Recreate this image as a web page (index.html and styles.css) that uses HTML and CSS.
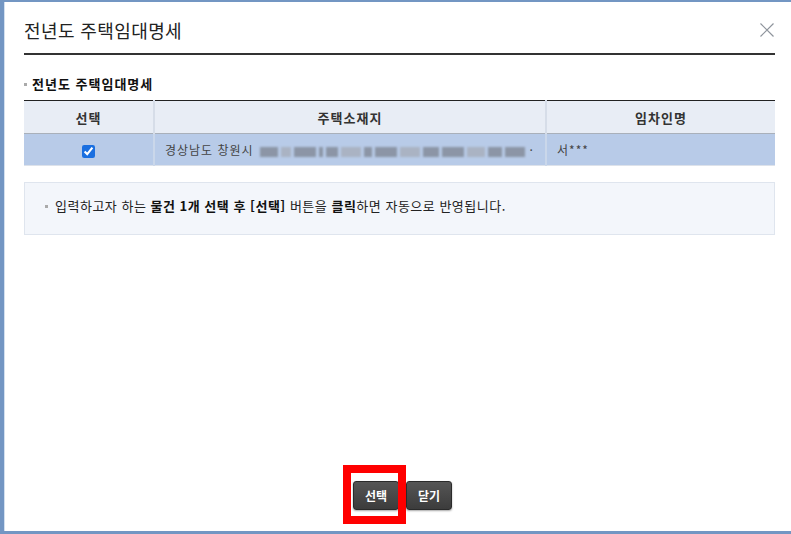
FILE: index.html
```html
<!DOCTYPE html>
<html lang="ko">
<head>
    <meta charset="UTF-8">
    <title>전년도 주택임대명세</title>
    <link rel="stylesheet" href="styles.css">
</head>
<body>
    <div class="popup">
        <div class="popup-head">
            <h1>전년도 주택임대명세</h1>
            <button class="close-btn" title="닫기">
                <svg width="14" height="14" viewBox="0 0 14 14">
                    <path d="M0.5 0.5 L13.5 13.5 M13.5 0.5 L0.5 13.5" stroke="#8e949c" stroke-width="1.2" fill="none"/>
                </svg>
            </button>
        </div>

        <h2 class="sub-title">전년도 주택임대명세</h2>

        <table class="list-table">
            <colgroup>
                <col style="width:130px">
                <col style="width:392px">
                <col>
            </colgroup>
            <thead>
                <tr>
                    <th>선택</th>
                    <th>주택소재지</th>
                    <th>임차인명</th>
                </tr>
            </thead>
            <tbody>
                <tr class="selected">
                    <td class="center"><input type="checkbox" checked></td>
                    <td>경상남도 창원시
                        <span class="masked">
                            <i class="m w18"></i><i class="m w10 lt"></i><i class="m w22"></i><i class="m w4"></i>
                            <i class="m w12"></i><i class="m w20 lt"></i><i class="m w8"></i>
                            <i class="m w22"></i><i class="m w20 lt"></i><i class="m w16"></i><i class="m w22"></i>
                            <i class="m w18 lt"></i><i class="m w14"></i><i class="m w20"></i>
                        </span> ·
                    </td>
                    <td>서***</td>
                </tr>
            </tbody>
        </table>

        <div class="info-box">
            <p><span class="dot"></span>입력하고자 하는 <b>물건 1개 선택 후 [선택]</b> 버튼을 <b>클릭</b>하면 자동으로 반영됩니다.</p>
        </div>

        <div class="popup-foot">
            <div class="btn-wrap">
                <button class="btn">선택</button>
                <span class="mark"></span>
            </div>
            <button class="btn">닫기</button>
        </div>
    </div>
</body>
</html>
```

FILE: styles.css
```css
html, body {
    margin: 0;
    padding: 0;
}

body {
    background: #7396c3;
    padding: 2px 0 0 4px;
    height: 534px;
    box-sizing: border-box;
    overflow: hidden;
    font-family: "Noto Sans CJK KR", "Noto Sans", sans-serif;
    color: #333;
}

.popup {
    background: #fff;
    border-left: 1px solid #d3e0ef;
    width: 800px;
    height: 529px;
    box-sizing: border-box;
    padding: 0 0 0 19px;
    display: flex;
    flex-direction: column;
}

.popup > * {
    width: 751px;
}

.popup-head {
    display: flex;
    align-items: center;
    justify-content: space-between;
    padding: 16px 0 11px;
    border-bottom: 2px solid #333;
}

.popup-head h1 {
    margin: 0;
    font-size: 18px;
    line-height: 24px;
    letter-spacing: 0.4px;
    font-weight: normal;
    color: #222;
}

.close-btn {
    border: none;
    background: none;
    padding: 0;
    width: 14px;
    height: 14px;
    margin-right: 1px;
    cursor: pointer;
    display: flex;
}

.sub-title {
    margin: 20px 0 7px;
    font-size: 13px;
    line-height: 18px;
    letter-spacing: 1px;
    font-weight: bold;
    color: #111;
    display: flex;
    align-items: center;
}

.sub-title::before {
    content: "";
    width: 3px;
    height: 3px;
    background: #aaa;
    margin-right: 5px;
}

.list-table {
    border-collapse: collapse;
    table-layout: fixed;
    border-top: 1px solid #222;
}

.list-table th {
    height: 32px;
    padding: 0;
    background: #e8edf5;
    font-size: 13px;
    letter-spacing: 1px;
    font-weight: bold;
    color: #333;
    border-bottom: 1px solid #a9b0ba;
    border-left: 2px solid #d6dde8;
}

.list-table td {
    height: 31px;
    padding: 0 10px;
    font-size: 12px;
    letter-spacing: 1px;
    color: #444;
    background: #b8cbe8;
    border-bottom: 1px solid #dde2ea;
    border-left: 2px solid #cad7ea;
    white-space: nowrap;
    overflow: hidden;
}

.list-table th:first-child,
.list-table td:first-child {
    border-left: none;
}

.list-table td.center {
    text-align: center;
}

.list-table input[type="checkbox"] {
    width: 13px;
    height: 13px;
    margin: 0;
    vertical-align: middle;
    accent-color: #1a6fe0;
}

.masked {
    display: inline-flex;
    align-items: center;
    gap: 3px;
    margin-left: 2px;
    vertical-align: middle;
    filter: blur(1px);
}

.m {
    display: inline-block;
    height: 10px;
    background: #8c95a6;
}

.m.lt { background: #aab3c3; }
.w4 { width: 4px; }
.w6 { width: 6px; }
.w8 { width: 8px; }
.w10 { width: 10px; }
.w12 { width: 12px; }
.w14 { width: 14px; }
.w16 { width: 16px; }
.w18 { width: 18px; }
.w20 { width: 20px; }
.w22 { width: 22px; }

.info-box {
    margin-top: 16px;
    background: #f3f6fb;
    border: 1px solid #dfe5ee;
    box-sizing: border-box;
    height: 53px;
    padding: 14px 20px 0;
}

.info-box p {
    margin: 0;
    font-size: 13px;
    line-height: 18px;
    letter-spacing: 0.5px;
    color: #222;
    display: flex;
    align-items: center;
    white-space: pre;
}

.info-box b {
    color: #111;
}

.info-box .dot {
    width: 3px;
    height: 3px;
    background: #aaa;
    margin-right: 7px;
}

.popup-foot {
    margin-top: auto;
    padding: 0 0 21px 3px;
    display: flex;
    justify-content: center;
    gap: 7px;
}

.btn-wrap {
    position: relative;
    display: flex;
}

.btn {
    height: 29px;
    width: 46px;
    padding: 0;
    border: 1px solid #2a2a2a;
    border-radius: 3px;
    background: linear-gradient(#555, #3c3c3c);
    box-shadow: 0 1px 2px rgba(0, 0, 0, 0.35);
    color: #fff;
    font-family: inherit;
    font-size: 12px;
    font-weight: bold;
    cursor: pointer;
}

.mark {
    position: absolute;
    left: -10px;
    top: -16px;
    width: 63px;
    height: 59px;
    box-sizing: border-box;
    border: 8px solid #ff0000;
}
```
